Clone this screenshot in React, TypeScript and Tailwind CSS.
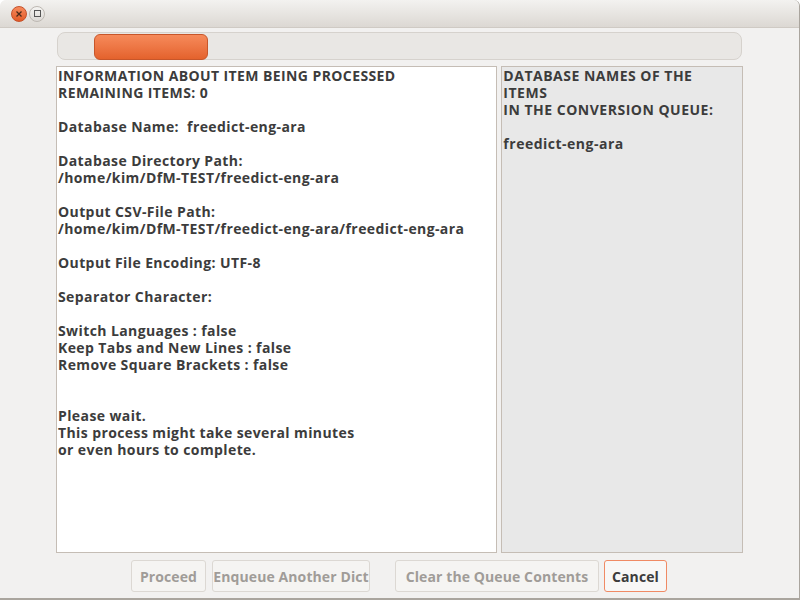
import React from "react";

const lines = [
  "INFORMATION ABOUT ITEM BEING PROCESSED",
  "REMAINING ITEMS: 0",
  "",
  "Database Name:  freedict-eng-ara",
  "",
  "Database Directory Path:",
  "/home/kim/DfM-TEST/freedict-eng-ara",
  "",
  "Output CSV-File Path:",
  "/home/kim/DfM-TEST/freedict-eng-ara/freedict-eng-ara",
  "",
  "Output File Encoding: UTF-8",
  "",
  "Separator Character:",
  "",
  "Switch Languages : false",
  "Keep Tabs and New Lines : false",
  "Remove Square Brackets : false",
  "",
  "",
  "Please wait.",
  "This process might take several minutes",
  "or even hours to complete.",
];

const right = [
  "DATABASE NAMES OF THE",
  "ITEMS",
  "IN THE CONVERSION QUEUE:",
  "",
  "freedict-eng-ara",
];

export default function App() {
  const font = { fontFamily: '"Open Sans", "DejaVu Sans", sans-serif' };
  return (
    <div className="w-[800px] h-[600px] bg-[#f2f1f0] flex flex-col overflow-hidden border-r border-b-2 border-[#aaa59e] rounded-t-[6px]" style={font}>
      <div className="h-[28px] shrink-0 flex items-center gap-[2px] pl-[11px] bg-gradient-to-b from-[#f3f2f0] to-[#dcd8d3] border-b border-[#cfcac4] rounded-t-[6px]">
        <div className="w-[16px] h-[16px] rounded-full bg-gradient-to-b from-[#f68a5c] to-[#e35a26] border border-[#c4502a] flex items-center justify-center">
          <svg width="8" height="8" viewBox="0 0 8 8"><path d="M1.5 1.5 L6.5 6.5 M6.5 1.5 L1.5 6.5" stroke="#4a2a1a" strokeWidth="1.3" /></svg>
        </div>
        <div className="w-[16px] h-[16px] rounded-full bg-gradient-to-b from-[#f5f4f2] to-[#dcd9d5] border border-[#bdb8b2] flex items-center justify-center">
          <div className="w-[7px] h-[7px] border border-[#555]" />
        </div>
      </div>
      <div className="flex-1 flex flex-col px-[56px] pt-[4px]">
        <div className="h-[28px] mx-[1px] rounded-[8px] bg-[#e9e7e4] border border-[#d6d2cd] relative shrink-0">
          <div className="absolute left-[36px] top-[1px] w-[114px] h-[26px] rounded-[6px] bg-gradient-to-b from-[#f68a5a] to-[#e4622c] border border-[#c7562a]" />
        </div>
        <div className="flex gap-[4px] mt-[6px] h-[487px]">
          <div className="w-[442px] bg-white border border-[#c5bdb5] pl-[1px] text-[14px] tracking-[0.4px] leading-[17px] font-bold text-[#3c3c3c] whitespace-pre">
            {lines.map((l, i) => (
              <div key={i} className="h-[17px]">{l}</div>
            ))}
          </div>
          <div className="w-[242px] bg-[#e8e8e8] border border-[#c5bdb5] pl-[1px] text-[14px] tracking-[0.5px] leading-[17px] font-bold text-[#3c3c3c] whitespace-pre">
            {right.map((l, i) => (
              <div key={i} className="h-[17px]">{l}</div>
            ))}
          </div>
        </div>
        <div className="flex justify-end mt-[7px] pr-[76px] text-[14px] tracking-[0.1px] font-bold whitespace-nowrap">
          <button className="w-[75px] h-[32px] rounded-[3px] border border-[#dcd8d3] bg-[#f5f4f2] text-[#a09c98]">Proceed</button>
          <button className="w-[158px] ml-[6px] h-[32px] rounded-[3px] border border-[#dcd8d3] bg-[#f5f4f2] text-[#a09c98]">Enqueue Another Dict</button>
          <button className="w-[204px] ml-[25px] h-[32px] rounded-[3px] border border-[#dcd8d3] bg-[#f5f4f2] text-[#a09c98]">Clear the Queue Contents</button>
          <button className="w-[63px] ml-[5px] h-[32px] rounded-[3px] border border-[#f08a64] bg-[#f8f7f6] text-[#3c3c3c]">Cancel</button>
        </div>
      </div>
    </div>
  );
}
